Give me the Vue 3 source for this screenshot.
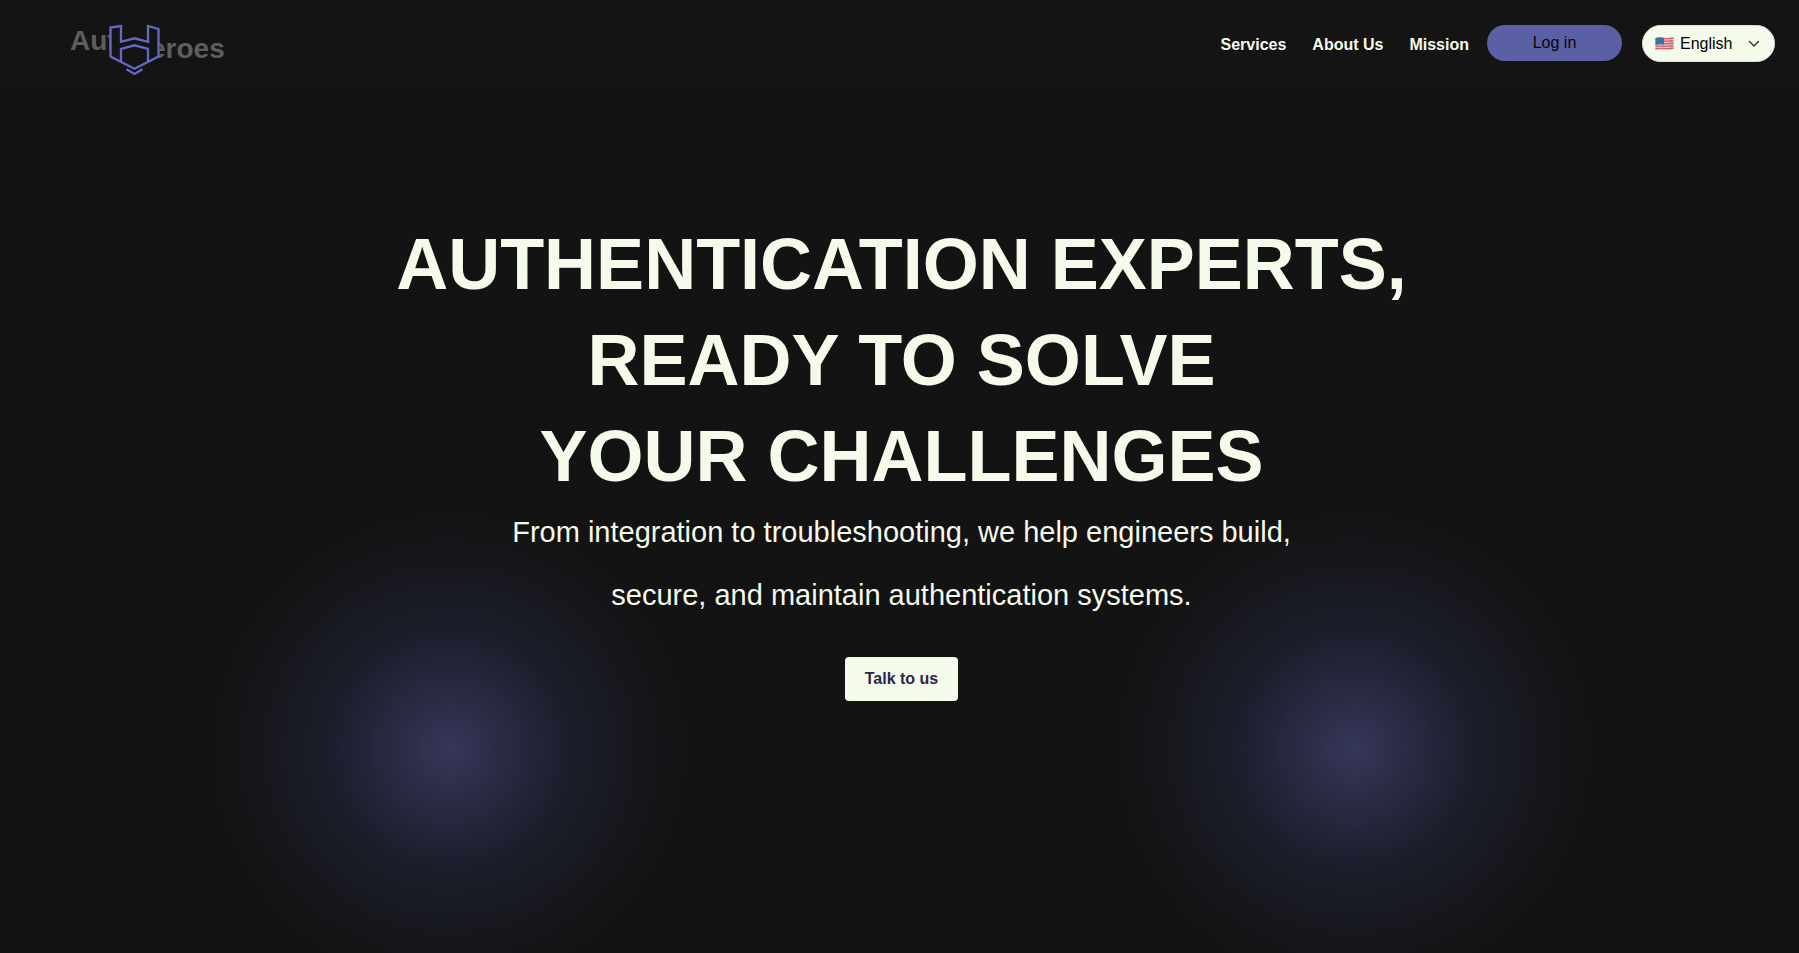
<script setup>
import { ref } from 'vue'

const links = [
  { label: 'Services', href: '#services' },
  { label: 'About Us', href: '#about' },
  { label: 'Mission', href: '#mission' },
]
const language = ref('en')
</script>

<template>
  <div class="page">
    <header class="header">
      <a class="logo" href="#" aria-label="AuthHeroes home">
        <svg width="156" height="54" viewBox="0 0 156 54">
          <g class="wordmark">
            <text x="-1" y="29">Aut</text>
            <text x="79" y="37">eroes</text>
          </g>
          <path class="badge" d="M39.500 6.500 50 5V20.800L63.500 17.300 77 20.800V5L87.500 8V35.500L63.500 47.700 39.500 35.500Z" />
          <path class="stroke" d="M50 40.800V28L63.500 24.300 77 28V40.800" />
          <path class="stroke" d="M55.500 48.300 63.500 53 71.500 48.300" />
        </svg>
      </a>
      <nav class="nav" aria-label="Main">
        <a v-for="link in links" :key="link.href" class="link" :href="link.href">{{ link.label }}</a>
      </nav>
      <button class="login" type="button">Log in</button>
      <div class="language">
        <svg class="flag" width="19" height="15" viewBox="0 0 19 15" aria-hidden="true">
          <path d="M0.500 2C5 0 10 3 18.500 1V13C12 15 7 12 0.500 14Z" fill="#e8c4c8" />
          <path d="M0.500 3C6 1 10 4 18.500 2M0.500 5.500C6 3.500 10 6.500 18.500 4.500M0.500 8C6 6 10 9 18.500 7M0.500 10.500C6 8.500 10 11.500 18.500 9.500M0.500 13C6 11 10 14 18.500 12" fill="none" stroke="#d4606c" stroke-width="1.400" />
          <path d="M0.500 2C4 1 6 1.300 9 2V8.500C6 8 4 8 0.500 9Z" fill="#3f6ea8" />
        </svg>
        <select v-model="language" class="select" aria-label="Language">
          <option value="en">English</option>
        </select>
        <svg class="chevron" width="12" height="8" viewBox="0 0 12 8" aria-hidden="true">
          <path d="M1.500 1.500 6 6 10.500 1.500" fill="none" stroke="#343a40" stroke-width="1.500" stroke-linecap="round" stroke-linejoin="round" />
        </svg>
      </div>
    </header>
    <main class="hero">
      <h1 class="title">AUTHENTICATION EXPERTS,<br />READY TO SOLVE<br />YOUR CHALLENGES</h1>
      <p class="subtitle">From integration to troubleshooting, we help engineers build,<br />secure, and maintain authentication systems.</p>
      <a class="cta" href="#contact">Talk to us</a>
    </main>
  </div>
</template>

<style>
body {
  margin: 0;
  background: #131313;
}
</style>

<style scoped>
.page {
  display: flex;
  flex-direction: column;
  min-height: 100vh;
  font-family: "Liberation Sans", Helvetica, Arial, sans-serif;
  font-size: 16px;
  color: #f5fbea;
  background:
    radial-gradient(circle at 25% 749px, #35375a 0, #2c2b46 50px, #1b1d2a 122px, rgba(27, 25, 36, 0) 236px),
    radial-gradient(circle at calc(75% + 5px) 749px, #35375a 0, #2c2b46 50px, #1b1d2a 122px, rgba(27, 25, 36, 0) 236px),
    #131313;
}

.header {
  display: flex;
  align-items: flex-start;
  box-sizing: border-box;
  height: 88px;
  padding: 25px 24px 0 71px;
  background: #141414;
  border-radius: 0 0 8px 8px;
  box-shadow: 0 2px 8px rgba(0, 0, 0, 0.1);
}

.logo {
  display: block;
  height: 54px;
  margin-top: -4px;
}

.logo svg {
  display: block;
  overflow: visible;
}

.wordmark {
  font-size: 28px;
  font-weight: 700;
  fill: #5e5f5a;
}

.badge {
  fill: #141414;
  stroke: #6469c4;
  stroke-width: 2.3;
}

.stroke {
  fill: none;
  stroke: #6469c4;
  stroke-width: 2.3;
}

.nav {
  display: flex;
  gap: 26px;
  margin-left: auto;
  margin-right: 18px;
}

.link {
  font-weight: 700;
  line-height: 40px;
  color: inherit;
  text-decoration: none;
}

.login {
  width: 135px;
  height: 36px;
  padding: 0;
  border: 0;
  border-radius: 18px;
  font: inherit;
  color: #050507;
  background: #5b5fa4;
}

.language {
  display: grid;
  grid-template-columns: 100%;
  align-items: center;
  width: 133px;
  margin-left: 20px;
}

.language > * {
  grid-area: 1 / 1;
}

.select {
  width: 100%;
  height: 37px;
  padding: 0 30px 0 37px;
  border: 1px solid #dee2e6;
  border-radius: 19px;
  font: inherit;
  color: #000;
  background: #f5fbea;
  appearance: none;
}

.flag {
  z-index: 1;
  margin-left: 13px;
  pointer-events: none;
}

.chevron {
  z-index: 1;
  justify-self: end;
  margin-right: 15px;
  pointer-events: none;
}

.hero {
  display: flex;
  flex-direction: column;
  align-items: center;
  padding: 128px 24px 80px 28px;
  text-align: center;
}

.title {
  margin: 0;
  font-size: 72px;
  line-height: 96px;
}

.subtitle {
  margin: -3px 0 0;
  font-size: 29px;
  line-height: 63px;
}

.cta {
  margin-top: 30px;
  padding: 0 20px;
  border-radius: 4px;
  font-weight: 700;
  line-height: 44px;
  color: #28284a;
  text-decoration: none;
  background: #f5fbea;
}
</style>
